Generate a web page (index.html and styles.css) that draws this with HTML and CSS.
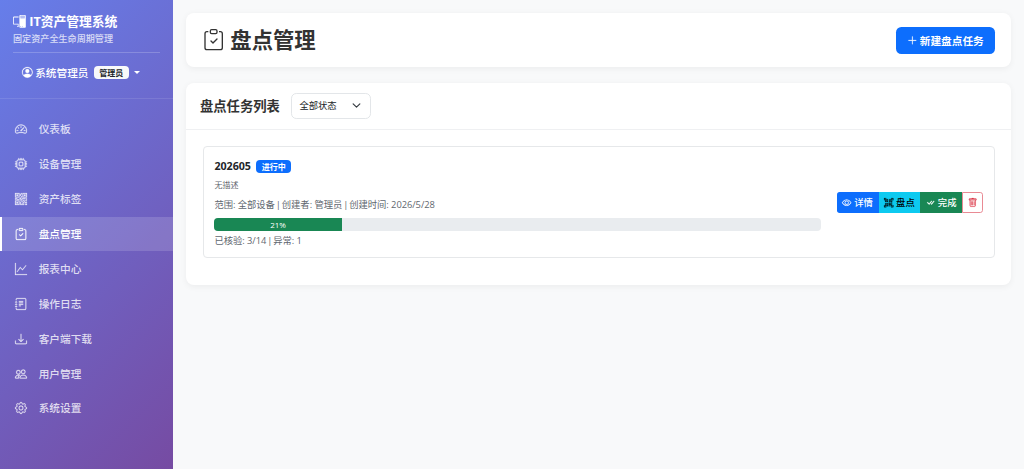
FILE: index.html
```html
<!DOCTYPE html>
<html lang="zh-CN">
<head>
    <meta charset="UTF-8">
    <meta name="viewport" content="width=device-width, initial-scale=1.0">
    <title>盘点管理 - IT资产管理系统</title>
    <link rel="stylesheet" href="styles.css">
</head>
<body>
    <nav class="sidebar">
        <div class="sidebar-header">
            <h4><svg class="icon" viewBox="0 0 16 16"><path d="M8 1a1 1 0 0 1 1-1h6a1 1 0 0 1 1 1v14a1 1 0 0 1-1 1H9a1 1 0 0 1-1-1zm1 13.5a.5.5 0 1 0 1 0 .5.5 0 0 0-1 0m2 0a.5.5 0 1 0 1 0 .5.5 0 0 0-1 0M9.5 1a.5.5 0 0 0 0 1h5a.5.5 0 0 0 0-1zM9 3.5a.5.5 0 0 0 .5.5h5a.5.5 0 0 0 0-1h-5a.5.5 0 0 0-.5.5M1.5 2A1.5 1.5 0 0 0 0 3.5v7A1.5 1.5 0 0 0 1.5 12H6v2h-.5a.5.5 0 0 0 0 1H7v-4H1.5a.5.5 0 0 1-.5-.5v-7a.5.5 0 0 1 .5-.5H7V2z"/></svg>IT资产管理系统</h4>
            <small>固定资产全生命周期管理</small>
            <div class="user">
                <svg class="icon" viewBox="0 0 16 16"><path d="M11 6a3 3 0 1 1-6 0 3 3 0 0 1 6 0"/><path fill-rule="evenodd" d="M0 8a8 8 0 1 1 16 0A8 8 0 0 1 0 8m8-7a7 7 0 0 0-5.468 11.37C3.242 11.226 4.805 10 8 10s4.757 1.225 5.468 2.37A7 7 0 0 0 8 1"/></svg>
                <span>系统管理员</span>
                <span class="badge badge-light">管理员</span>
                <i class="caret"></i>
            </div>
        </div>
        <div class="menu">
            <a href="#"><svg class="icon" viewBox="0 0 16 16"><path d="M8 4a.5.5 0 0 1 .5.5V6a.5.5 0 0 1-1 0V4.5A.5.5 0 0 1 8 4M3.732 5.732a.5.5 0 0 1 .707 0l.915.914a.5.5 0 1 1-.708.708l-.914-.915a.5.5 0 0 1 0-.707M2 10a.5.5 0 0 1 .5-.5h1.586a.5.5 0 0 1 0 1H2.5A.5.5 0 0 1 2 10m9.5 0a.5.5 0 0 1 .5-.5h1.5a.5.5 0 0 1 0 1H12a.5.5 0 0 1-.5-.5m.754-4.246a.39.39 0 0 0-.527-.02L7.547 9.31a.91.91 0 1 0 1.302 1.258l3.434-4.297a.39.39 0 0 0-.029-.518z"/><path fill-rule="evenodd" d="M0 10a8 8 0 1 1 15.547 2.661c-.442 1.253-1.845 1.602-2.932 1.25C11.309 13.488 9.475 13 8 13c-1.474 0-3.31.488-4.615.911-1.087.352-2.49.003-2.932-1.25A8 8 0 0 1 0 10m8-7a7 7 0 0 0-6.603 9.329c.203.575.923.876 1.68.63C4.397 12.533 6.358 12 8 12s3.604.532 4.923.96c.757.245 1.477-.056 1.68-.631A7 7 0 0 0 8 3"/></svg>仪表板</a>
            <a href="#"><svg class="icon" viewBox="0 0 16 16"><path d="M5 0a.5.5 0 0 1 .5.5V2h1V.5a.5.5 0 0 1 1 0V2h1V.5a.5.5 0 0 1 1 0V2h1V.5a.5.5 0 0 1 1 0V2A2.5 2.5 0 0 1 14 4.5h1.5a.5.5 0 0 1 0 1H14v1h1.5a.5.5 0 0 1 0 1H14v1h1.5a.5.5 0 0 1 0 1H14v1h1.5a.5.5 0 0 1 0 1H14a2.5 2.5 0 0 1-2.5 2.5v1.5a.5.5 0 0 1-1 0V14h-1v1.5a.5.5 0 0 1-1 0V14h-1v1.5a.5.5 0 0 1-1 0V14h-1v1.5a.5.5 0 0 1-1 0V14A2.5 2.5 0 0 1 2 11.5H.5a.5.5 0 0 1 0-1H2v-1H.5a.5.5 0 0 1 0-1H2v-1H.5a.5.5 0 0 1 0-1H2v-1H.5a.5.5 0 0 1 0-1H2A2.5 2.5 0 0 1 4.5 2V.5A.5.5 0 0 1 5 0m-.5 3A1.5 1.5 0 0 0 3 4.5v7A1.5 1.5 0 0 0 4.5 13h7a1.5 1.5 0 0 0 1.5-1.5v-7A1.5 1.5 0 0 0 11.5 3zM5 6.5A1.5 1.5 0 0 1 6.5 5h3A1.5 1.5 0 0 1 11 6.5v3A1.5 1.5 0 0 1 9.5 11h-3A1.5 1.5 0 0 1 5 9.5zM6.5 6a.5.5 0 0 0-.5.5v3a.5.5 0 0 0 .5.5h3a.5.5 0 0 0 .5-.5v-3a.5.5 0 0 0-.5-.5z"/></svg>设备管理</a>
            <a href="#"><svg class="icon" viewBox="0 0 16 16"><path d="M2 2h2v2H2z"/><path d="M6 0v6H0V0zM5 1H1v4h4zM4 12H2v2h2z"/><path d="M6 10v6H0v-6zm-5 1v4h4v-4zm11-9h2v2h-2z"/><path d="M10 0v6h6V0zm5 1v4h-4V1zM8 1V0h1v2H8v2H7V1zm0 5V4h1v2zM6 8V7h1V6h1v2h1V7h5v1h-4v1H7V8zm0 0v1H2V8H1v1H0V7h3v1zm10 1h-1V7h1zm-1 0h-1v2h2v-1h-1zm-4 0h2v1h-1v1h-1zm2 3v-1h-1v1h-1v1H9v1h3v-2zm0 0h3v1h-2v1h-1zm-4-1v1h1v-2H7v1z"/><path d="M7 12h1v3h4v1H7zm9 2v2h-3v-1h2v-1z"/></svg>资产标签</a>
            <a href="#" class="active"><svg class="icon" viewBox="0 0 16 16"><path d="M10.854 7.146a.5.5 0 0 1 0 .708l-3 3a.5.5 0 0 1-.708 0l-1.5-1.5a.5.5 0 1 1 .708-.708L7.5 9.793l2.646-2.647a.5.5 0 0 1 .708 0"/><path d="M4 1.5H3a2 2 0 0 0-2 2V14a2 2 0 0 0 2 2h10a2 2 0 0 0 2-2V3.5a2 2 0 0 0-2-2h-1v1h1a1 1 0 0 1 1 1V14a1 1 0 0 1-1 1H3a1 1 0 0 1-1-1V3.5a1 1 0 0 1 1-1h1z"/><path d="M9.5 1a.5.5 0 0 1 .5.5v1a.5.5 0 0 1-.5.5h-3a.5.5 0 0 1-.5-.5v-1a.5.5 0 0 1 .5-.5zm-3-1A1.5 1.5 0 0 0 5 1.5v1A1.5 1.5 0 0 0 6.5 4h3A1.5 1.5 0 0 0 11 2.5v-1A1.5 1.5 0 0 0 9.5 0z"/></svg>盘点管理</a>
            <a href="#"><svg class="icon" viewBox="0 0 16 16"><path fill-rule="evenodd" d="M0 0h1v15h15v1H0zm14.817 3.113a.5.5 0 0 1 .07.704l-4.5 5.5a.5.5 0 0 1-.74.037L7.06 6.767l-3.656 5.027a.5.5 0 0 1-.808-.588l4-5.5a.5.5 0 0 1 .758-.06l2.609 2.61 4.15-5.073a.5.5 0 0 1 .704-.07"/></svg>报表中心</a>
            <a href="#"><svg class="icon" viewBox="0 0 16 16"><path d="M5 10.5a.5.5 0 0 1 .5-.5h2a.5.5 0 0 1 0 1h-2a.5.5 0 0 1-.5-.5m0-2a.5.5 0 0 1 .5-.5h5a.5.5 0 0 1 0 1h-5a.5.5 0 0 1-.5-.5m0-2a.5.5 0 0 1 .5-.5h5a.5.5 0 0 1 0 1h-5a.5.5 0 0 1-.5-.5m0-2a.5.5 0 0 1 .5-.5h5a.5.5 0 0 1 0 1h-5a.5.5 0 0 1-.5-.5"/><path d="M3 0h10a2 2 0 0 1 2 2v12a2 2 0 0 1-2 2H3a2 2 0 0 1-2-2v-1h1v1a1 1 0 0 0 1 1h10a1 1 0 0 0 1-1V2a1 1 0 0 0-1-1H3a1 1 0 0 0-1 1v1H1V2a2 2 0 0 1 2-2"/><path d="M1 5v-.5a.5.5 0 0 1 1 0V5h.5a.5.5 0 0 1 0 1h-2a.5.5 0 0 1 0-1zm0 3v-.5a.5.5 0 0 1 1 0V8h.5a.5.5 0 0 1 0 1h-2a.5.5 0 0 1 0-1zm0 3v-.5a.5.5 0 0 1 1 0v.5h.5a.5.5 0 0 1 0 1h-2a.5.5 0 0 1 0-1z"/></svg>操作日志</a>
            <a href="#"><svg class="icon" viewBox="0 0 16 16"><path d="M.5 9.9a.5.5 0 0 1 .5.5v2.5a1 1 0 0 0 1 1h12a1 1 0 0 0 1-1v-2.5a.5.5 0 0 1 1 0v2.5a2 2 0 0 1-2 2H2a2 2 0 0 1-2-2v-2.5a.5.5 0 0 1 .5-.5"/><path d="M7.646 11.854a.5.5 0 0 0 .708 0l3-3a.5.5 0 0 0-.708-.708L8.5 10.293V1.5a.5.5 0 0 0-1 0v8.793L5.354 8.146a.5.5 0 1 0-.708.708z"/></svg>客户端下载</a>
            <a href="#"><svg class="icon" viewBox="0 0 16 16"><path d="M15 14s1 0 1-1-1-4-5-4-5 3-5 4 1 1 1 1zm-7.978-1L7 12.996c.001-.264.167-1.03.76-1.72C8.312 10.629 9.282 10 11 10c1.717 0 2.687.63 3.24 1.276.593.69.758 1.457.76 1.72l-.008.002-.014.002zM11 7a2 2 0 1 0 0-4 2 2 0 0 0 0 4m3-2a3 3 0 1 1-6 0 3 3 0 0 1 6 0M6.936 9.28a6 6 0 0 0-1.23-.247A7 7 0 0 0 5 9c-4 0-5 3-5 4q0 1 1 1h4.216A2.24 2.24 0 0 1 5 13c0-1.01.377-2.042 1.09-2.904.243-.294.526-.569.846-.816M4.92 10A5.5 5.5 0 0 0 4 13H1c0-.26.164-1.03.76-1.724.545-.636 1.492-1.256 3.16-1.275ZM1.5 5.5a3 3 0 1 1 6 0 3 3 0 0 1-6 0m3-2a2 2 0 1 0 0 4 2 2 0 0 0 0-4"/></svg>用户管理</a>
            <a href="#"><svg class="icon" viewBox="0 0 16 16"><path d="M8 4.754a3.246 3.246 0 1 0 0 6.492 3.246 3.246 0 0 0 0-6.492M5.754 8a2.246 2.246 0 1 1 4.492 0 2.246 2.246 0 0 1-4.492 0"/><path d="M9.796 1.343c-.527-1.79-3.065-1.79-3.592 0l-.094.319a.873.873 0 0 1-1.255.52l-.292-.16c-1.64-.892-3.433.902-2.54 2.541l.159.292a.873.873 0 0 1-.52 1.255l-.319.094c-1.79.527-1.79 3.065 0 3.592l.319.094a.873.873 0 0 1 .52 1.255l-.16.292c-.892 1.64.901 3.434 2.541 2.54l.292-.159a.873.873 0 0 1 1.255.52l.094.319c.527 1.79 3.065 1.79 3.592 0l.094-.319a.873.873 0 0 1 1.255-.52l.292.16c1.64.893 3.434-.902 2.54-2.541l-.159-.292a.873.873 0 0 1 .52-1.255l.319-.094c1.79-.527 1.79-3.065 0-3.592l-.319-.094a.873.873 0 0 1-.52-1.255l.16-.292c.893-1.64-.902-3.433-2.541-2.54l-.292.159a.873.873 0 0 1-1.255-.52zm-2.633.283c.246-.835 1.428-.835 1.674 0l.094.319a1.873 1.873 0 0 0 2.693 1.115l.291-.16c.764-.415 1.6.42 1.184 1.185l-.159.292a1.873 1.873 0 0 0 1.116 2.692l.318.094c.835.246.835 1.428 0 1.674l-.319.094a1.873 1.873 0 0 0-1.115 2.693l.16.291c.415.764-.42 1.6-1.185 1.184l-.291-.159a1.873 1.873 0 0 0-2.693 1.116l-.094.318c-.246.835-1.428.835-1.674 0l-.094-.319a1.873 1.873 0 0 0-2.692-1.115l-.292.16c-.764.415-1.6-.42-1.184-1.185l.159-.291A1.873 1.873 0 0 0 1.945 8.93l-.319-.094c-.835-.246-.835-1.428 0-1.674l.319-.094A1.873 1.873 0 0 0 3.06 4.377l-.16-.292c-.415-.764.42-1.6 1.185-1.184l.292.159a1.873 1.873 0 0 0 2.692-1.115z"/></svg>系统设置</a>
        </div>
    </nav>

    <main class="content">
        <div class="card page-header">
            <h2><svg class="icon" viewBox="0 0 16 16"><path d="M10.854 7.146a.5.5 0 0 1 0 .708l-3 3a.5.5 0 0 1-.708 0l-1.5-1.5a.5.5 0 1 1 .708-.708L7.5 9.793l2.646-2.647a.5.5 0 0 1 .708 0"/><path d="M4 1.5H3a2 2 0 0 0-2 2V14a2 2 0 0 0 2 2h10a2 2 0 0 0 2-2V3.5a2 2 0 0 0-2-2h-1v1h1a1 1 0 0 1 1 1V14a1 1 0 0 1-1 1H3a1 1 0 0 1-1-1V3.5a1 1 0 0 1 1-1h1z"/><path d="M9.5 1a.5.5 0 0 1 .5.5v1a.5.5 0 0 1-.5.5h-3a.5.5 0 0 1-.5-.5v-1a.5.5 0 0 1 .5-.5zm-3-1A1.5 1.5 0 0 0 5 1.5v1A1.5 1.5 0 0 0 6.5 4h3A1.5 1.5 0 0 0 11 2.5v-1A1.5 1.5 0 0 0 9.5 0z"/></svg>盘点管理</h2>
            <button class="btn-new"><svg class="icon" viewBox="0 0 16 16"><path d="M8 2a.5.5 0 0 1 .5.5v5h5a.5.5 0 0 1 0 1h-5v5a.5.5 0 0 1-1 0v-5h-5a.5.5 0 0 1 0-1h5v-5A.5.5 0 0 1 8 2"/></svg>新建盘点任务</button>
        </div>

        <div class="card">
            <div class="card-header">
                <h5>盘点任务列表</h5>
                <div class="select">
                    <span>全部状态</span>
                    <svg viewBox="0 0 16 16"><path d="m2 5 6 6 6-6"/></svg>
                </div>
            </div>
            <div class="card-body">
                <div class="task">
                    <div class="task-info">
                        <div class="task-title">
                            <h6>202605</h6>
                            <span class="badge badge-primary">进行中</span>
                        </div>
                        <p class="desc">无描述</p>
                        <p class="meta">范围: 全部设备 <span class="sep">|</span> 创建者: 管理员 <span class="sep">|</span> 创建时间: 2026/5/28</p>
                        <div class="progress">
                            <div class="progress-bar" style="width: 21%">21%</div>
                        </div>
                        <p class="meta">已核验: 3/14 <span class="sep">|</span> 异常: 1</p>
                    </div>
                    <div class="btn-group">
                        <button class="btn-primary"><svg class="icon" viewBox="0 0 16 16"><path d="M16 8s-3-5.5-8-5.5S0 8 0 8s3 5.5 8 5.5S16 8 16 8M1.173 8a13 13 0 0 1 1.66-2.043C4.12 4.668 5.88 3.5 8 3.5s3.879 1.168 5.168 2.457A13 13 0 0 1 14.828 8q-.086.13-.195.288c-.335.48-.83 1.12-1.465 1.755C11.879 11.332 10.119 12.5 8 12.5s-3.879-1.168-5.168-2.457A13 13 0 0 1 1.172 8z"/><path d="M8 5.5a2.5 2.5 0 1 0 0 5 2.5 2.5 0 0 0 0-5M4.5 8a3.5 3.5 0 1 1 7 0 3.5 3.5 0 0 1-7 0"/></svg>详情</button>
                        <button class="btn-info"><svg class="icon" viewBox="0 0 16 16"><path d="M0 .5A.5.5 0 0 1 .5 0h3a.5.5 0 0 1 0 1H1v2.5a.5.5 0 0 1-1 0zm12 0a.5.5 0 0 1 .5-.5h3a.5.5 0 0 1 .5.5v3a.5.5 0 0 1-1 0V1h-2.5a.5.5 0 0 1-.5-.5M.5 12a.5.5 0 0 1 .5.5V15h2.5a.5.5 0 0 1 0 1h-3a.5.5 0 0 1-.5-.5v-3a.5.5 0 0 1 .5-.5m15 0a.5.5 0 0 1 .5.5v3a.5.5 0 0 1-.5.5h-3a.5.5 0 0 1 0-1H15v-2.5a.5.5 0 0 1 .5-.5M4 4h1v1H4z"/><path d="M7 2H2v5h5zM3 3h3v3H3zm2 8H4v1h1z"/><path d="M7 9H2v5h5zm-4 1h3v3H3zm8-6h1v1h-1z"/><path d="M9 2h5v5H9zm1 1v3h3V3zM8 8v2h1v1H8v1h2v-2h1v2h1v-1h2v-1h-3V8zm2 2H9V9h1zm4 2h-1v1h-2v1h3zm-4 2v-1H8v1z"/><path d="M12 9h2V8h-2z"/></svg>盘点</button>
                        <button class="btn-success"><svg class="icon" viewBox="0 0 16 16"><path d="M8.97 4.97a.75.75 0 0 1 1.07 1.05l-3.99 4.99a.75.75 0 0 1-1.08.02L2.324 8.384a.75.75 0 1 1 1.06-1.06l2.094 2.093L8.95 4.992zm-.92 5.14.92.92a.75.75 0 0 0 1.079-.02l3.992-4.99a.75.75 0 1 0-1.091-1.028L9.477 9.417l-.485-.486z"/></svg>完成</button>
                        <button class="btn-delete"><svg class="icon" viewBox="0 0 16 16"><path d="M5.5 5.5A.5.5 0 0 1 6 6v6a.5.5 0 0 1-1 0V6a.5.5 0 0 1 .5-.5m2.5 0a.5.5 0 0 1 .5.5v6a.5.5 0 0 1-1 0V6a.5.5 0 0 1 .5-.5m3 .5a.5.5 0 0 0-1 0v6a.5.5 0 0 0 1 0z"/><path d="M14.5 3a1 1 0 0 1-1 1H13v9a2 2 0 0 1-2 2H5a2 2 0 0 1-2-2V4h-.5a1 1 0 0 1-1-1V2a1 1 0 0 1 1-1H6a1 1 0 0 1 1-1h2a1 1 0 0 1 1 1h3.5a1 1 0 0 1 1 1zM4.118 4 4 4.059V13a1 1 0 0 0 1 1h6a1 1 0 0 0 1-1V4.059L11.882 4zM2.5 3h11V2h-11z"/></svg></button>
                    </div>
                </div>
            </div>
        </div>
    </main>
</body>
</html>
```

FILE: styles.css
```css
* {
    box-sizing: border-box;
}
body {
    display: flex;
    height: 469px;
    margin: 0;
    overflow: hidden;
    background-color: #f8f9fa;
    color: #212529;
    font-family: "Open Sans", "Noto Sans CJK SC", sans-serif;
    font-size: 10.67px;
    line-height: 16px;
}
h2, h4, h5, h6, p {
    margin: 0;
}
button {
    font-family: inherit;
    cursor: pointer;
}
.icon {
    width: 1em;
    height: 1em;
    fill: currentColor;
    stroke: currentColor;
    stroke-width: 0.3;
    overflow: visible;
    flex-shrink: 0;
}

/* sidebar */
.sidebar {
    width: 173.33px;
    flex-shrink: 0;
    background: linear-gradient(135deg, #667eea 0%, #764ba2 100%);
    color: #fff;
}
.sidebar-header {
    height: 99px;
    padding: 12px 13px 0;
    border-bottom: 1px solid rgba(255, 255, 255, 0.1);
}
.sidebar-header h4 {
    display: flex;
    align-items: center;
    gap: 3.5px;
    height: 18px;
    font-size: 12.8px;
    font-weight: 700;
    letter-spacing: -0.05px;
}
.sidebar-header h4 .icon {
    stroke: none;
}
.sidebar-header small {
    display: block;
    height: 22px;
    line-height: 18px;
    font-size: 9.1px;
    font-weight: 500;
    opacity: 0.75;
}
.user {
    display: flex;
    align-items: center;
    height: 40px;
    padding-left: 9px;
    border-top: 1px solid rgba(255, 255, 255, 0.2);
    gap: 2.5px;
    font-weight: 500;
}
.badge {
    display: inline-block;
    padding: 0 5.3px;
    height: 13.3px;
    line-height: 13.3px;
    border-radius: 4px;
    font-size: 8px;
    font-weight: 700;
}
.badge-light {
    margin-left: 3px;
    background-color: #f8f9fa;
    color: #212529;
}
.caret {
    margin-left: 3px;
    border-top: 3.5px solid #fff;
    border-left: 3.5px solid transparent;
    border-right: 3.5px solid transparent;
}
.menu {
    padding-top: 13.3px;
}
.menu a {
    display: flex;
    align-items: center;
    height: 33.6px;
    margin-bottom: 1.33px;
    padding-left: 12.7px;
    gap: 12px;
    border-left: 2px solid transparent;
    color: rgba(255, 255, 255, 0.8);
    font-weight: 500;
    text-decoration: none;
}
.menu .icon {
    width: 12px;
    height: 12px;
}
.menu a.active {
    background-color: rgba(255, 255, 255, 0.15);
    border-left-color: #fff;
    color: #fff;
}

/* main area */
.content {
    flex: 1;
    padding: 13.3px 12.7px 0 13px;
}
.card {
    background-color: #fff;
    border-radius: 8px;
    box-shadow: 0 1.3px 6.7px rgba(0, 0, 0, 0.05);
}
.page-header {
    display: flex;
    align-items: center;
    justify-content: space-between;
    height: 53.5px;
    margin-bottom: 16px;
    padding: 0 16.7px;
}
.page-header h2 {
    display: flex;
    align-items: center;
    gap: 6px;
    color: #333;
    font-size: 21.33px;
    font-weight: 700;
    line-height: 26px;
}
.page-header h2 .icon {
    stroke: none;
}
.btn-new {
    display: flex;
    align-items: center;
    gap: 2.5px;
    height: 27px;
    padding: 0 10.9px;
    border: none;
    border-radius: 5.3px;
    background-color: #0d6efd;
    color: #fff;
    font-size: 10.67px;
    font-weight: 600;
}
.card-header {
    display: flex;
    align-items: center;
    gap: 10.7px;
    height: 47px;
    padding: 0 13.6px;
    border-bottom: 1px solid #eff0f2;
}
.card-header h5 {
    color: #333;
    font-size: 13.33px;
    font-weight: 700;
}
.select {
    display: flex;
    align-items: center;
    justify-content: space-between;
    width: 80px;
    height: 26px;
    padding: 0 9px 0 7.8px;
    border: 1px solid #e3e6e9;
    border-radius: 5.3px;
    font-size: 9.33px;
}
.select svg {
    width: 9px;
    height: 9px;
    fill: none;
    stroke: #343a40;
    stroke-width: 2;
    stroke-linecap: round;
    stroke-linejoin: round;
}
.card-body {
    padding: 16.7px;
    padding-bottom: 27px;
}
.task {
    display: flex;
    align-items: center;
    height: 112px;
    padding: 0 10.4px;
    border: 1px solid #e6e8ea;
    border-radius: 4px;
}
.task-info {
    width: 606.7px;
    margin-right: 15.7px;
    padding-top: 2px;
}
.task-title {
    display: flex;
    align-items: center;
    gap: 5.5px;
    height: 14px;
}
.task-title h6 {
    font-size: 10.67px;
    font-weight: 700;
}
.badge-primary {
    background-color: #0d6efd;
    color: #fff;
}
.desc {
    margin: 5px 0;
    line-height: 14px;
    color: #5f676f;
    font-size: 8px;
}
.meta {
    line-height: 15px;
    color: #5f676f;
    font-size: 9.33px;
    letter-spacing: -0.05px;
}
.sep {
    margin: 0 -1.45px;
}
.progress {
    height: 13.3px;
    margin: 5.6px 0 1.4px;
    overflow: hidden;
    border-radius: 4px;
    background-color: #e9ecef;
}
.progress-bar {
    height: 100%;
    line-height: 13.3px;
    background-color: #198754;
    color: #fff;
    font-size: 8px;
    text-align: center;
}
.btn-group {
    display: flex;
    height: 20.7px;
}
.btn-group button {
    display: flex;
    align-items: center;
    justify-content: center;
    gap: 2.5px;
    width: 41.8px;
    padding: 0;
    border: none;
    color: #fff;
    font-size: 9.33px;
    font-weight: 500;
}
.btn-group .btn-primary {
    border-radius: 2.7px 0 0 2.7px;
    background-color: #0d6efd;
}
.btn-group .btn-info {
    background-color: #0dcaf0;
    color: #000;
}
.btn-group .btn-success {
    background-color: #198754;
}
.btn-group .btn-delete {
    width: 21px;
    border: 1px solid #e98a94;
    border-radius: 0 2.7px 2.7px 0;
    background-color: #fff;
    color: #dc3545;
}
```
